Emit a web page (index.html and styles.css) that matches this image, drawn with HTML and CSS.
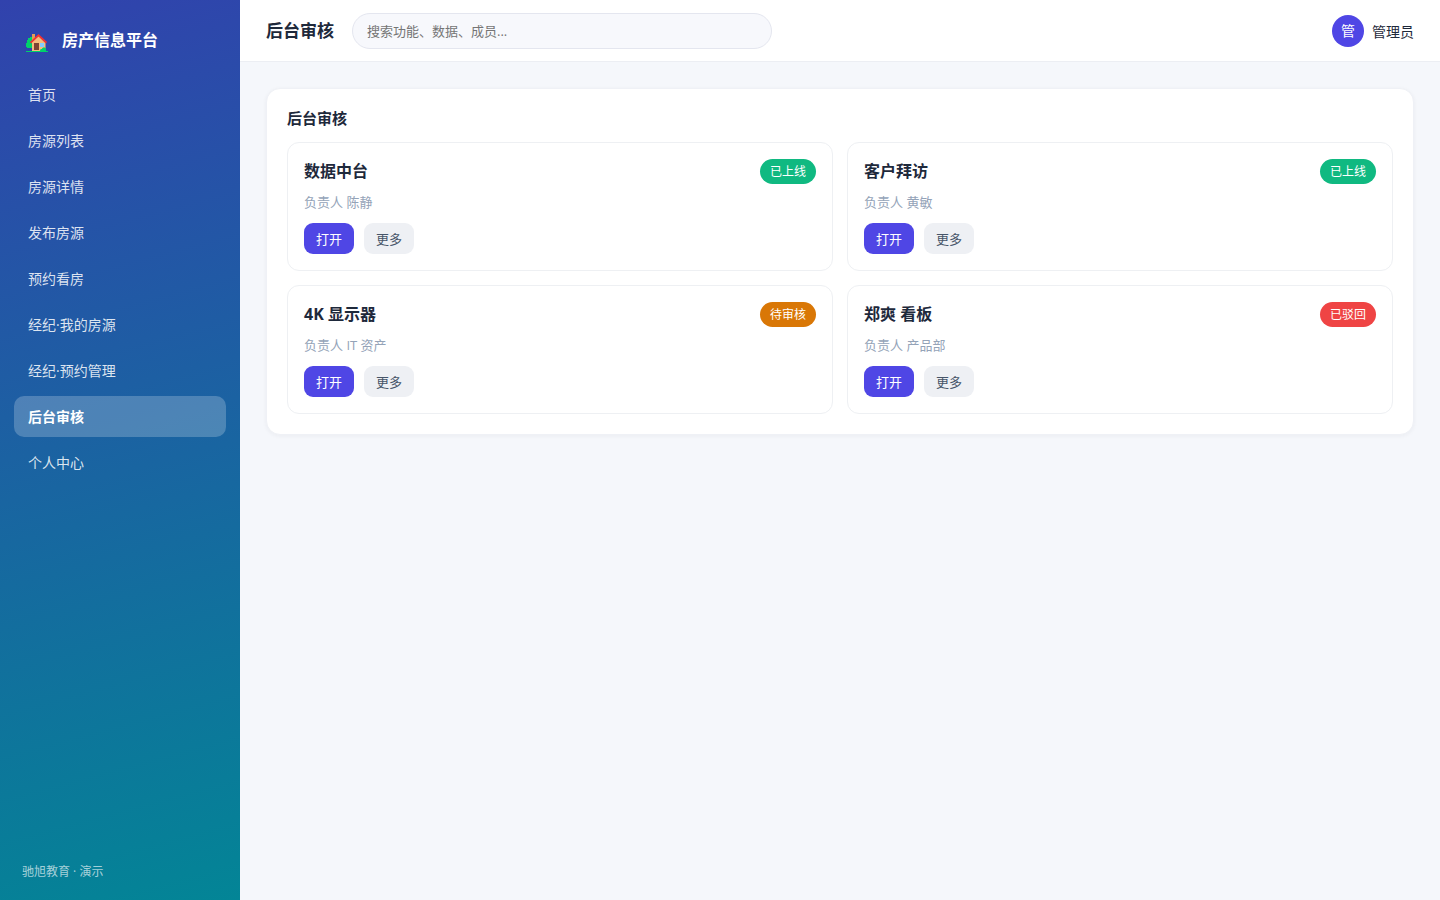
FILE: index.html
```html
<!DOCTYPE html>
<html lang="zh-CN">
<head>
  <meta charset="UTF-8">
  <meta name="viewport" content="width=device-width, initial-scale=1.0">
  <title>后台审核</title>
  <link rel="stylesheet" href="styles.css">
</head>
<body>
  <div class="layout">
    <aside class="sidebar">
      <div class="brand">
        <svg class="brand-icon" viewBox="0 0 24 24" aria-hidden="true">
          <path fill="#00d26a" d="M5 5h2v11H2v-1H1v-4h1V8h1V6h2z"/>
          <path fill="#e39d54" d="M7 2h3v6H7z"/>
          <path fill="#f3bd7c" d="M13.500 4l7 7v8H7v-9z"/>
          <path fill="#f8312f" d="M13.500 2l8.500 8-1 1.500-7.500-7L6 11.500 5 10z"/>
          <path fill="#7d4533" d="M9 11h5v7H9z"/>
          <path fill="#83cbff" d="M15 11h4v4h-4z"/>
          <path fill="#00d26a" d="M15 19c0-2 1-2 2-2 0-2 4-2 4 0v2zM1 19h22v1H1z"/>
        </svg>
        <span>房产信息平台</span>
      </div>
      <nav class="nav">
        <a href="#">首页</a>
        <a href="#">房源列表</a>
        <a href="#">房源详情</a>
        <a href="#">发布房源</a>
        <a href="#">预约看房</a>
        <a href="#">经纪·我的房源</a>
        <a href="#">经纪·预约管理</a>
        <a href="#" class="active">后台审核</a>
        <a href="#">个人中心</a>
      </nav>
      <div class="sidebar-foot">驰旭教育 · 演示</div>
    </aside>

    <div class="main">
      <header class="topbar">
        <h1>后台审核</h1>
        <input class="search" type="search" placeholder="搜索功能、数据、成员..." aria-label="搜索">
        <div class="user">
          <span class="avatar">管</span>
          <span>管理员</span>
        </div>
      </header>

      <main class="content">
        <section class="panel">
          <h2>后台审核</h2>
          <div class="grid">
            <article class="card">
              <div class="card-head">
                <h3>数据中台</h3>
                <span class="badge online">已上线</span>
              </div>
              <p class="owner">负责人 陈静</p>
              <div class="actions">
                <button type="button" class="btn primary">打开</button>
                <button type="button" class="btn">更多</button>
              </div>
            </article>
            <article class="card">
              <div class="card-head">
                <h3>客户拜访</h3>
                <span class="badge online">已上线</span>
              </div>
              <p class="owner">负责人 黄敏</p>
              <div class="actions">
                <button type="button" class="btn primary">打开</button>
                <button type="button" class="btn">更多</button>
              </div>
            </article>
            <article class="card">
              <div class="card-head">
                <h3>4K 显示器</h3>
                <span class="badge pending">待审核</span>
              </div>
              <p class="owner">负责人 IT 资产</p>
              <div class="actions">
                <button type="button" class="btn primary">打开</button>
                <button type="button" class="btn">更多</button>
              </div>
            </article>
            <article class="card">
              <div class="card-head">
                <h3>郑爽 看板</h3>
                <span class="badge rejected">已驳回</span>
              </div>
              <p class="owner">负责人 产品部</p>
              <div class="actions">
                <button type="button" class="btn primary">打开</button>
                <button type="button" class="btn">更多</button>
              </div>
            </article>
          </div>
        </section>
      </main>
    </div>
  </div>
</body>
</html>
```
FILE: styles.css
```css
* {
  box-sizing: border-box;
}

body {
  margin: 0;
  font-family: "Open Sans", "Noto Sans CJK SC", sans-serif;
  font-size: 14px;
  line-height: 21px;
  color: #1e293b;
  background: #f5f7fb;
}

h1, h2, h3, p {
  margin: 0;
}

.layout {
  display: flex;
  min-height: 100vh;
}

/* sidebar */
.sidebar {
  display: flex;
  flex-direction: column;
  flex: none;
  width: 240px;
  padding: 22px 14px 18px;
  color: #fff;
  background: linear-gradient(165deg, #3142ad, #038596);
}

.brand {
  display: flex;
  align-items: center;
  gap: 13px;
  padding: 0 11px;
  margin-bottom: 16px;
  font-size: 16px;
  font-weight: 700;
  line-height: 36px;
}

.brand-icon {
  width: 24px;
  height: 24px;
  margin-top: 8px;
}

.nav {
  display: flex;
  flex-direction: column;
  gap: 5px;
}

.nav a {
  padding: 10px 14px;
  border-radius: 10px;
  color: rgba(255, 255, 255, 0.85);
  text-decoration: none;
}

.nav a.active {
  color: #fff;
  font-weight: 700;
  background: rgba(255, 255, 255, 0.22);
}

.sidebar-foot {
  margin-top: auto;
  padding: 0 8px;
  font-size: 12px;
  line-height: 20px;
  color: rgba(255, 255, 255, 0.65);
}

/* top bar */
.main {
  flex: 1;
  min-width: 0;
}

.topbar {
  display: flex;
  align-items: center;
  gap: 18px;
  padding: 13px 26px 12px;
  background: #fff;
  border-bottom: 1px solid #eceef3;
}

.topbar h1 {
  font-size: 17px;
  line-height: 26px;
}

.search {
  width: 420px;
  height: 36px;
  padding: 0 14px;
  border: 1px solid #e4e6ef;
  border-radius: 18px;
  outline: none;
  font-family: inherit;
  font-size: 13px;
  background: #f7f8fc;
  appearance: none;
}

.search::placeholder {
  color: #757575;
}

.user {
  display: flex;
  align-items: center;
  gap: 8px;
  margin-left: auto;
}

.avatar {
  width: 32px;
  height: 32px;
  border-radius: 50%;
  font-size: 14px;
  line-height: 32px;
  text-align: center;
  color: #fff;
  background: #4f46e5;
}

/* content */
.content {
  padding: 26px;
}

.panel {
  padding: 20px;
  border: 1px solid #eff1f6;
  border-radius: 14px;
  background: #fff;
  box-shadow: 0 1px 4px rgba(30, 41, 59, 0.05);
}

.panel h2 {
  margin-bottom: 14px;
  font-size: 15px;
  line-height: 19px;
}

.grid {
  display: grid;
  grid-template-columns: repeat(2, 1fr);
  gap: 14px;
}

.card {
  padding: 16px;
  border: 1px solid #eef0f3;
  border-radius: 12px;
}

.card-head {
  display: flex;
  justify-content: space-between;
  align-items: center;
}

.card h3 {
  font-size: 16px;
  line-height: 25px;
}

.badge {
  padding: 0 10px;
  border-radius: 13px;
  font-size: 12px;
  line-height: 25px;
  color: #fff;
}

.online {
  background: #10b981;
}

.pending {
  background: #d97706;
}

.rejected {
  background: #ef4444;
}

.owner {
  margin: 8px 0 11px;
  font-size: 13px;
  line-height: 20px;
  color: #94a3b8;
}

.actions {
  display: flex;
  gap: 10px;
}

.btn {
  height: 31px;
  padding: 0 12px;
  border: none;
  border-radius: 9px;
  font-family: inherit;
  font-size: 13px;
  color: #475569;
  background: #eef0f4;
  cursor: pointer;
}

.btn.primary {
  color: #fff;
  background: #4f46e5;
}
```
